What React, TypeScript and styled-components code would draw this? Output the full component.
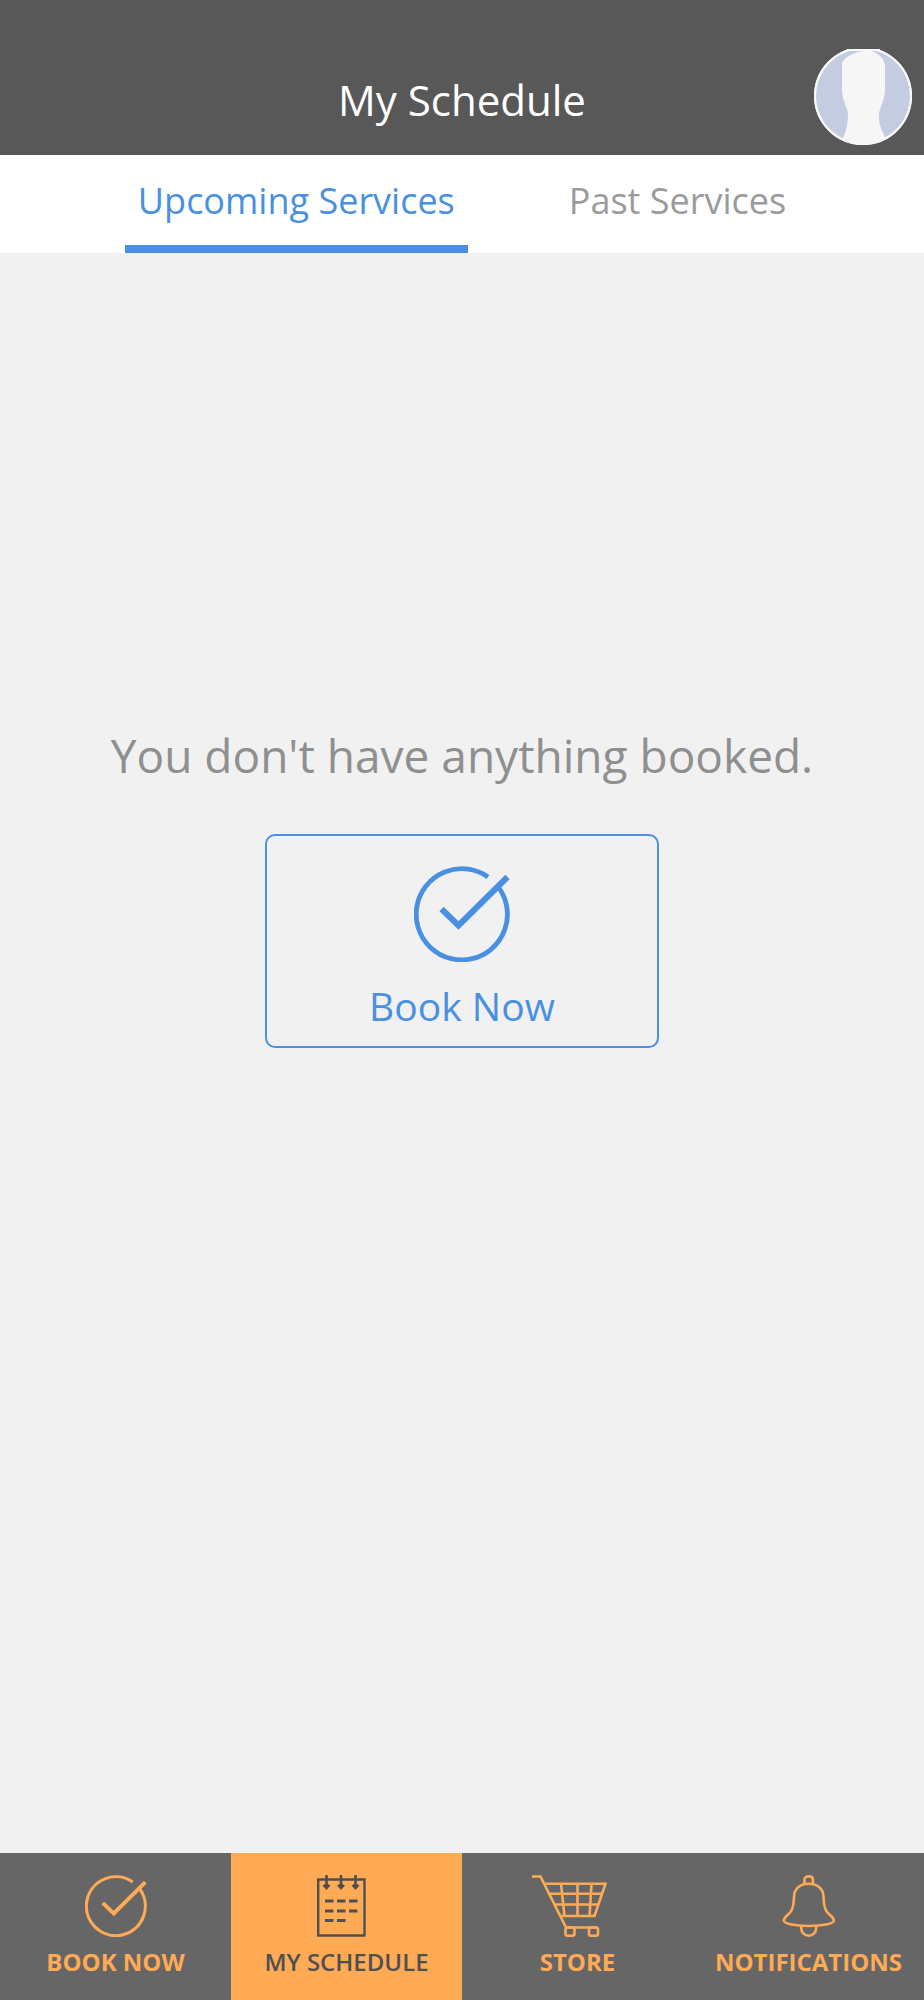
import React, { useState } from "react";
import styled, { createGlobalStyle } from "styled-components";

const colors = {
  header: "#585858",
  bar: "#666666",
  page: "#f1f1f1",
  blue: "#4a90e2",
  orange: "#ffaa55",
  dark: "#4f4f4f",
  muted: "#9b9b9b",
  message: "#8f8f8f",
};

const GlobalStyle = createGlobalStyle`
  *, *::before, *::after { box-sizing: border-box; }
  body {
    margin: 0;
    background: ${colors.page};
    font-family: "Open Sans", "Noto Sans", sans-serif;
  }
  button { font: inherit; cursor: pointer; }
`;

const Screen = styled.div`
  display: flex;
  flex-direction: column;
  min-height: 100vh;
`;

const Header = styled.header`
  display: grid;
  grid-template-columns: 1fr auto 1fr;
  align-items: end;
  padding: 49px 12px 10px;
  background: ${colors.header};
`;

const Title = styled.h1`
  grid-column: 2;
  margin: 0;
  padding-bottom: 17px;
  font-size: 42px;
  font-weight: 400;
  line-height: 56px;
  color: #ffffff;
`;

const AvatarButton = styled.button`
  display: flex;
  justify-self: end;
  padding: 0;
  border: 0;
  background: none;
`;

const Tabs = styled.div`
  display: flex;
  justify-content: center;
  gap: 88px;
  background: #ffffff;
`;

const Tab = styled.button<{ $active: boolean }>`
  padding: 20px 13px 18px;
  border: 0;
  border-bottom: 8px solid ${(p) => (p.$active ? colors.blue : "transparent")};
  background: none;
  color: ${(p) => (p.$active ? colors.blue : colors.muted)};
  && {
    font-size: 36px;
    line-height: 52px;
  }
`;

const Content = styled.main`
  display: flex;
  flex: 1;
  flex-direction: column;
  align-items: center;
  gap: 47px;
  padding: 470px 24px 48px;
`;

const Message = styled.p`
  margin: 0;
  font-size: 46px;
  line-height: 64px;
  text-align: center;
  color: ${colors.message};
`;

const BookButton = styled.button`
  display: flex;
  flex-direction: column;
  align-items: center;
  gap: 16px;
  width: 394px;
  max-width: 100%;
  padding: 30px 16px 12px;
  border: 2px solid ${colors.blue};
  border-radius: 10px;
  background: none;
  color: ${colors.blue};
  && {
    font-size: 39px;
    line-height: 56px;
  }
`;

const BottomNav = styled.nav`
  display: grid;
  grid-template-columns: repeat(4, 1fr);
  background: ${colors.bar};
`;

const NavItem = styled.a<{ $active?: boolean }>`
  display: flex;
  flex-direction: column;
  align-items: center;
  gap: 9px;
  padding: 22px 0;
  background: ${(p) => (p.$active ? colors.orange : "transparent")};
  color: ${(p) => (p.$active ? colors.dark : colors.orange)};
  font-size: 24px;
  font-weight: ${(p) => (p.$active ? 600 : 700)};
  line-height: 32px;
  white-space: nowrap;
  text-decoration: none;
`;

const Avatar = () => (
  <svg width="98" height="96" viewBox="0 0 98 96" aria-hidden="true">
    <defs>
      <clipPath id="avatar-disc">
        <circle cx="49" cy="47" r="48" />
      </clipPath>
    </defs>
    <circle cx="49" cy="47" r="49" fill="#f8f8f8" />
    <circle cx="49" cy="47" r="47" fill="#c3cce0" />
    <g clipPath="url(#avatar-disc)">
      <path
        d="M49 2C38 4 29 9 28 15V40C28 50 32 56 34 64C34 72 33 79 31 84L26 96H74L69 84C66 77 64 71 65 64C67 56 71 50 71 40V15C69 8 62 3 57 2Z"
        fill="#f6f6f6"
      />
    </g>
    <circle cx="49" cy="47" r="48" fill="none" stroke="#f8f8f8" strokeWidth="2" />
    <path d="M33 1H66" stroke="#f8f8f8" strokeWidth="2" />
  </svg>
);

const CheckIcon = ({ size }: { size: number }) => (
  <svg width={size} height={size} viewBox="0 0 96 96" fill="none" stroke="currentColor" aria-hidden="true">
    <path d="M74 11A45.6 45.6 0 1 0 84 20.6" strokeWidth="4.8" />
    <path d="M27.5 43L44.5 59.5L93.5 11" strokeWidth="6" />
  </svg>
);

const ScheduleIcon = () => (
  <svg width="60" height="62" viewBox="0 0 60 62" fill="none" stroke="currentColor" aria-hidden="true">
    <path d="M1.2 4.5H47.5V60.5H1.2Z" strokeWidth="2.4" />
    <path d="M9.5 0V12M24 0V12M38.5 0V12" strokeWidth="2.6" />
    <path
      d="M5.5 10.5L8 9H11L13.5 10.5L9.5 15ZM20 10.5L22.5 9H25.5L28 10.5L24 15ZM34.5 10.5L37 9H40L42.5 10.5L38.5 15Z"
      fill="currentColor"
      stroke="none"
    />
    <path
      d="M8 26H16.5M20 26H28.5M32 26H40.5M8 36H16.5M20 36H28.5M32 36H40.5M8 45.5H16.5M20 45.5H28.5"
      strokeWidth="2.8"
    />
  </svg>
);

const CartIcon = () => (
  <svg width="92" height="62" viewBox="0 0 92 62" fill="none" stroke="currentColor" strokeWidth="2.6" aria-hidden="true">
    <path d="M0 1.5H8.5L34 52.5H65" />
    <path d="M12.5 8.7H73.5L62.5 41H28" />
    <path d="M17.5 18.7H70M22.5 29.5H66.5" />
    <path d="M29 8.7L32.5 41M45.5 8.7V41M59.5 8.7L57.5 41" />
    <rect x="33.5" y="52.5" width="9" height="8.2" rx="2" />
    <rect x="57" y="52.5" width="9" height="8.2" rx="2" />
  </svg>
);

const BellIcon = () => (
  <svg width="60" height="62" viewBox="0 0 60 62" fill="none" stroke="currentColor" strokeWidth="2.6" aria-hidden="true">
    <path d="M25.5 9.5V4.5Q25.5 1.4 29.7 1.4Q33.9 1.4 33.9 4.5V9.5" />
    <path d="M29.7 8.7C21 8.7 15.2 14 15 21.5C14.9 28 14.5 33 11.5 37C9 40 5 42 4.8 45.5C5 49 17 51 29.7 51C42.4 51 54.7 49 54.9 45.5C54.5 42 50.5 40 48 37C45 33 44.6 28 44.5 21.5C44.3 14 38.5 8.7 29.7 8.7Z" />
    <path d="M22.3 51V53.5A7.4 7.2 0 0 0 37.1 53.5V51" />
  </svg>
);

const tabs = ["Upcoming Services", "Past Services"];

export default function App() {
  const [activeTab, setActiveTab] = useState(tabs[0]);

  return (
    <>
      <GlobalStyle />
      <Screen>
        <Header>
          <Title>My Schedule</Title>
          <AvatarButton type="button" aria-label="Profile">
            <Avatar />
          </AvatarButton>
        </Header>
        <Tabs role="tablist">
          {tabs.map((name) => (
            <Tab
              key={name}
              type="button"
              role="tab"
              aria-selected={name === activeTab}
              $active={name === activeTab}
              onClick={() => setActiveTab(name)}
            >
              {name}
            </Tab>
          ))}
        </Tabs>
        <Content>
          <Message>You don't have anything booked.</Message>
          <BookButton type="button">
            <CheckIcon size={96} />
            Book Now
          </BookButton>
        </Content>
        <BottomNav>
          <NavItem href="#book">
            <CheckIcon size={62} />
            BOOK NOW
          </NavItem>
          <NavItem href="#schedule" $active aria-current="page">
            <ScheduleIcon />
            MY SCHEDULE
          </NavItem>
          <NavItem href="#store">
            <CartIcon />
            STORE
          </NavItem>
          <NavItem href="#notifications">
            <BellIcon />
            NOTIFICATIONS
          </NavItem>
        </BottomNav>
      </Screen>
    </>
  );
}
